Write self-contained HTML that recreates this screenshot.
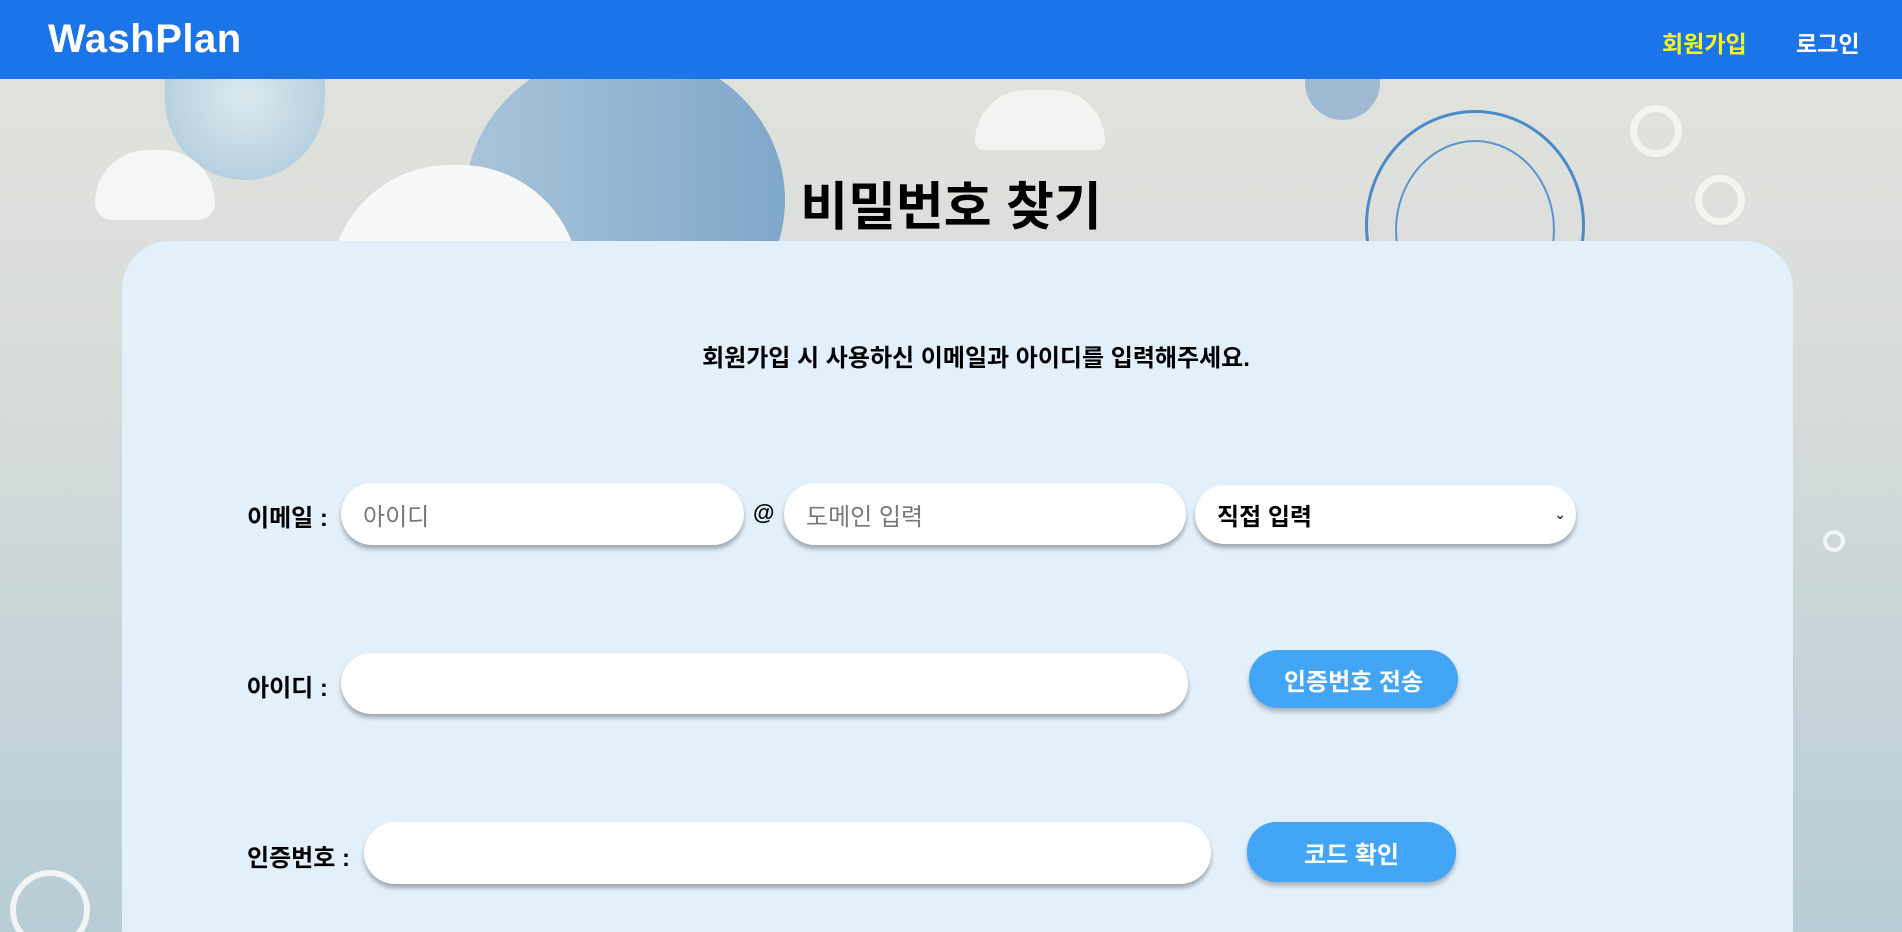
<!DOCTYPE html>
<html><head><meta charset="utf-8"><style>
*{box-sizing:border-box;margin:0;padding:0}
html,body{width:1902px;height:932px;overflow:hidden}
body{position:relative;font-family:"Liberation Sans","Noto Sans CJK KR",sans-serif;
background:linear-gradient(180deg,#e2e3de 0%,#d8dcd9 40%,#c4d3d8 75%,#b7ccd6 100%);}
.hdr{position:absolute;left:0;top:0;width:1902px;height:79px;background:#1b74e8;z-index:5}
.logo{position:absolute;left:48px;top:17px;color:#fff;font-size:40px;font-weight:bold;letter-spacing:0.5px}
.nav{position:absolute;top:25px;font-size:23px;font-weight:bold}
.deco{position:absolute;border-radius:50%}
h1{position:absolute;left:0;width:1902px;top:165px;text-align:center;font-size:52px;font-weight:bold;color:#000}
.card{position:absolute;left:122px;top:241px;width:1671px;height:700px;background:#e2f0fc;border-radius:48px 48px 0 0}
.t{position:absolute;font-weight:bold;color:#000;font-size:24px}
.inp{position:absolute;background:#fff;border-radius:31px;box-shadow:0 4px 5px rgba(0,0,0,0.3);color:#777;font-size:24px;padding-left:22px;display:flex;align-items:center}
.btn{position:absolute;background:#42a5f5;border-radius:29px;box-shadow:0 4px 5px rgba(0,0,0,0.25);color:#fff;font-size:24px;font-weight:bold;display:flex;align-items:center;justify-content:center}
</style></head><body>
<div class="deco" style="left:165px;top:60px;width:160px;height:120px;background:radial-gradient(circle at 50% 30%,#dbe9ef,#a9c6d8);border-radius:0 0 80px 80px"></div>
<div class="deco" style="left:465px;top:50px;width:320px;height:300px;background:linear-gradient(90deg,#a9c4d9,#7fa7c9);"></div>
<div class="deco" style="left:1305px;top:70px;width:75px;height:50px;background:#9ebad3;border-radius:0 0 40px 40px"></div>
<div class="deco" style="left:1365px;top:110px;width:220px;height:230px;border:3px solid #4b8ac9"></div>
<div class="deco" style="left:1395px;top:140px;width:160px;height:180px;border:2px solid #5b95cc"></div>
<div class="deco" style="left:1630px;top:105px;width:52px;height:52px;border:7px solid #f3f3f0"></div>
<div class="deco" style="left:1695px;top:175px;width:50px;height:50px;border:7px solid #f3f3f0"></div>
<div class="deco" style="left:1823px;top:530px;width:22px;height:22px;border:4px solid #f0f4f4"></div>
<div class="deco" style="left:330px;top:165px;width:250px;height:120px;background:#f7f8f8;border-radius:120px 120px 0 0"></div>
<div class="deco" style="left:95px;top:150px;width:120px;height:70px;background:#f5f6f6;border-radius:60px 60px 20px 20px"></div>
<div class="deco" style="left:975px;top:90px;width:130px;height:60px;background:#f2f3f1;border-radius:60px 60px 10px 10px"></div>
<div class="deco" style="left:10px;top:870px;width:80px;height:80px;border:6px solid #f3f5f5"></div>
<div class="hdr"><div class="logo">WashPlan</div>
<div class="nav" style="left:1662px;color:#f5f521">회원가입</div>
<div class="nav" style="left:1796px;color:#fff">로그인</div></div>
<h1>비밀번호 찾기</h1>
<div class="card"></div>
<div class="t" style="left:0;width:1952px;text-align:center;top:338px;font-size:24px">회원가입 시 사용하신 이메일과 아이디를 입력해주세요.</div>
<div class="t" style="left:247px;top:498px">이메일 :</div>
<div class="inp" style="left:341px;top:483px;width:403px;height:62px">아이디</div>
<div class="t" style="left:753px;top:500px;font-size:22px">@</div>
<div class="inp" style="left:784px;top:483px;width:402px;height:62px">도메인 입력</div>
<div class="inp" style="left:1195px;top:485px;width:381px;height:59px;color:#000;font-weight:bold">직접 입력<span style="position:absolute;right:10px;font-size:14px;font-weight:normal">⌄</span></div>
<div class="t" style="left:247px;top:668px">아이디 :</div>
<div class="inp" style="left:341px;top:653px;width:847px;height:61px"></div>
<div class="btn" style="left:1249px;top:650px;width:209px;height:58px">인증번호 전송</div>
<div class="t" style="left:247px;top:838px">인증번호 :</div>
<div class="inp" style="left:364px;top:822px;width:847px;height:62px"></div>
<div class="btn" style="left:1247px;top:822px;width:209px;height:60px">코드 확인</div>
</body></html>
